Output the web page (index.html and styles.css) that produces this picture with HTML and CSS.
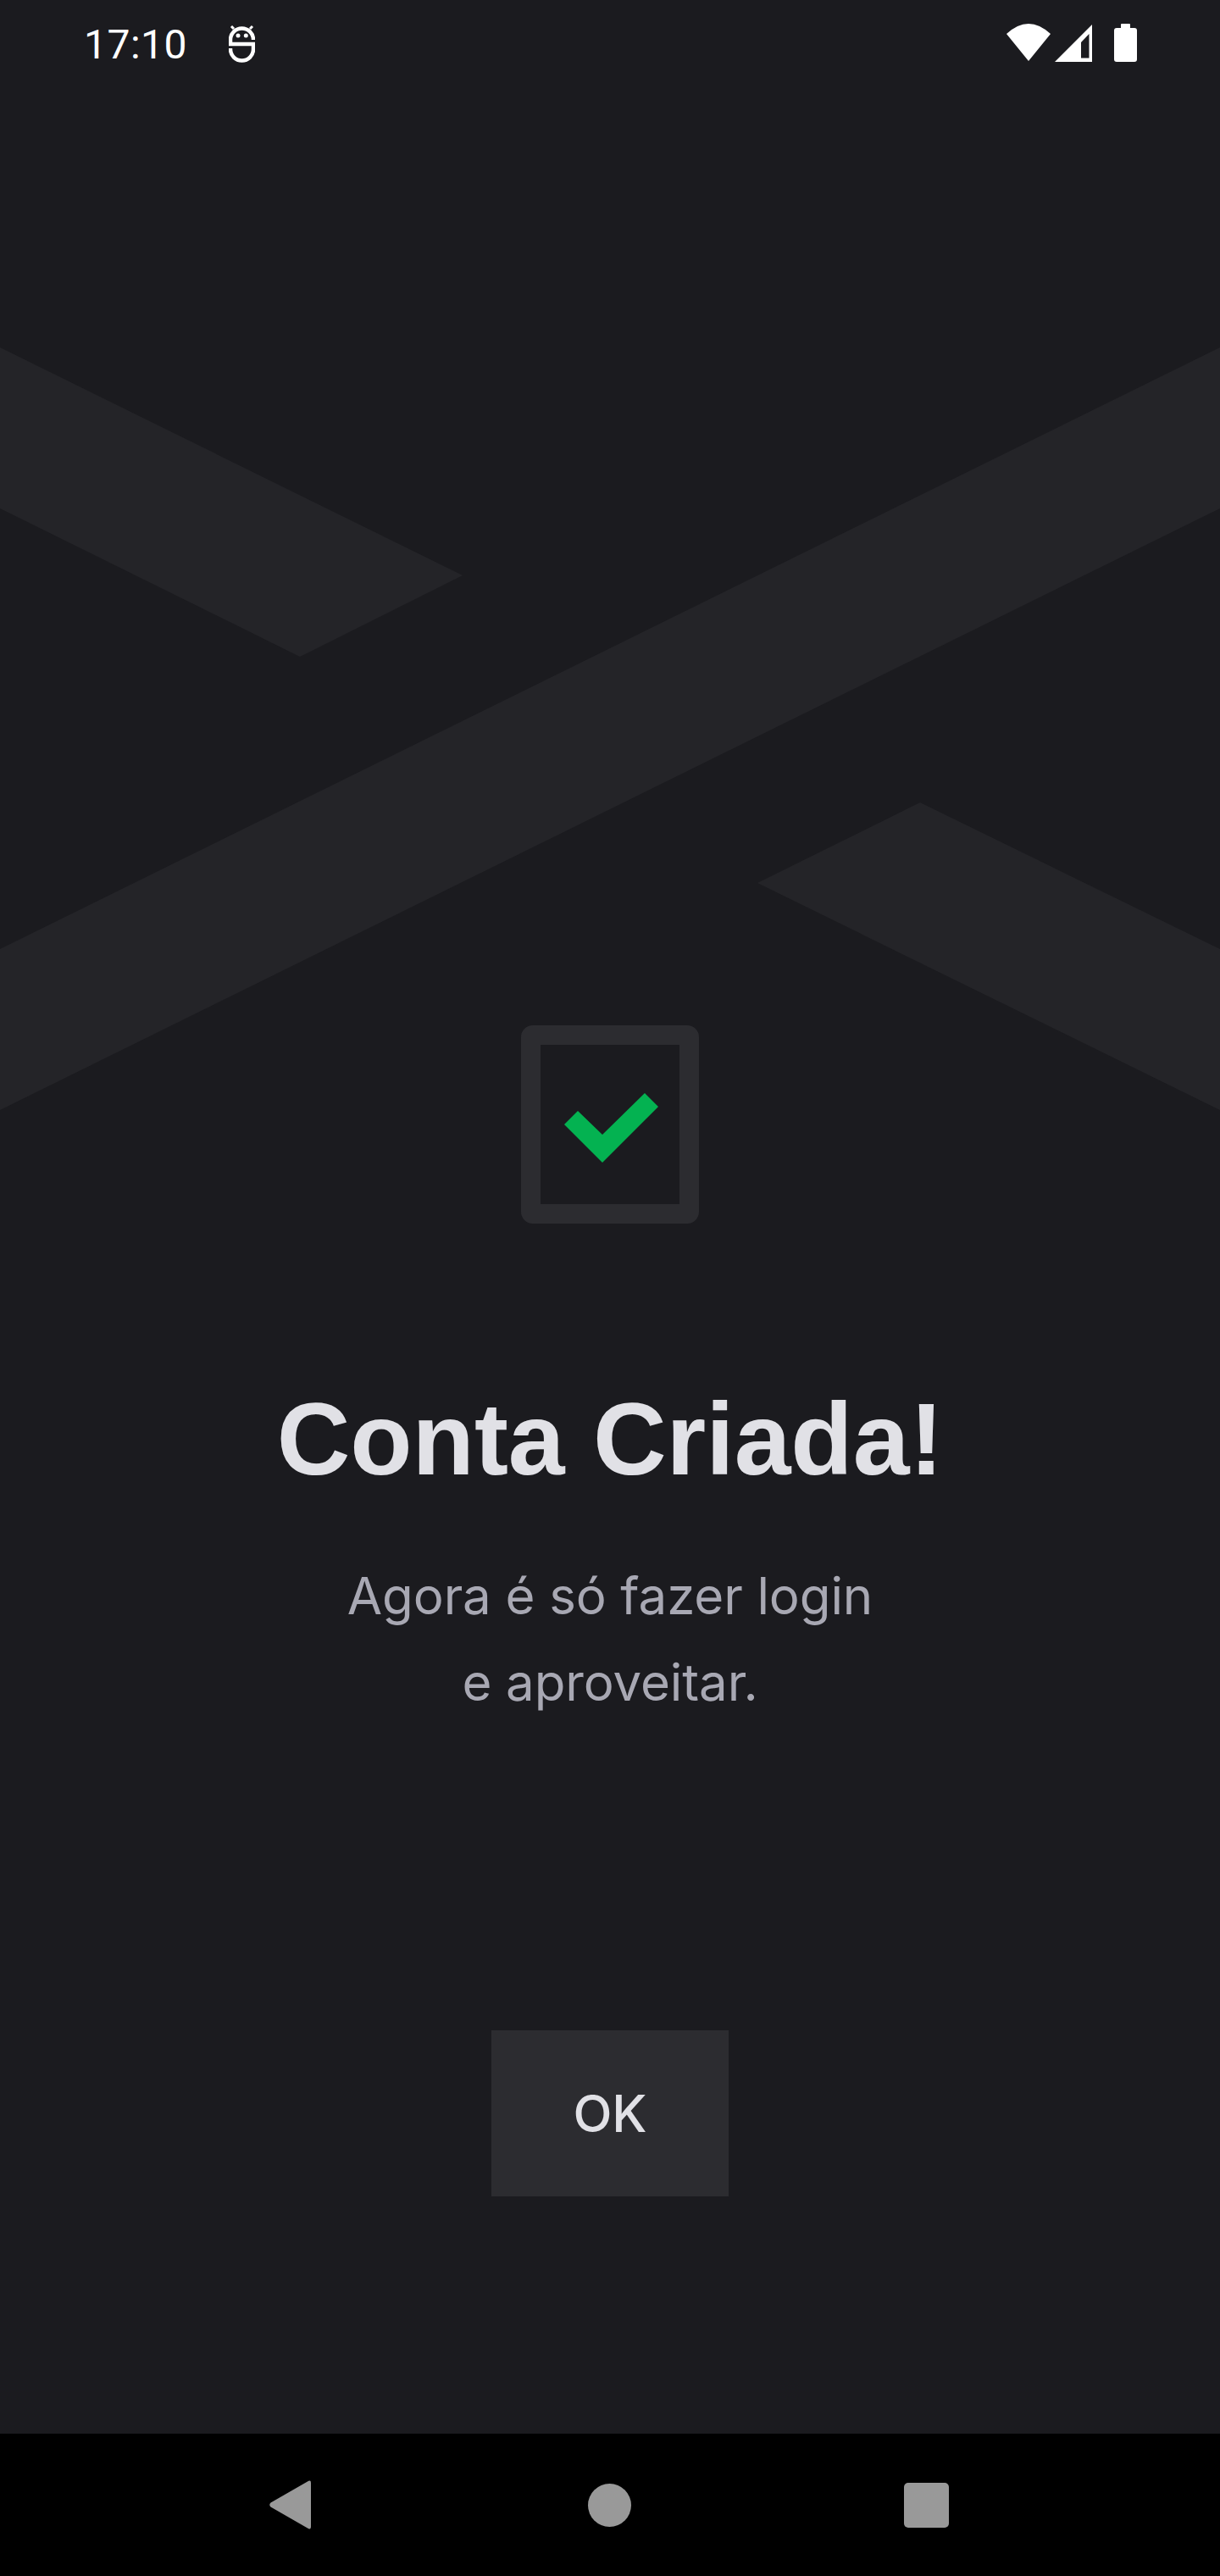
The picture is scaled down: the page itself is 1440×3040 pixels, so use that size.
FILE: index.html
```html
<!DOCTYPE html>
<html>
<head>
    <title>Conta Criada</title>
    <link rel="stylesheet" href="styles.css">
</head>
<body>
    <div class="screen">
        <svg class="bg-shapes" width="1440" height="2872" viewBox="0 0 1440 2872">
            <polygon points="0,410 546,679 354,775 0,600"/>
            <polygon points="0,1120 1440,410 1440,600 0,1310"/>
            <polygon points="894,1042 1086,947 1440,1120 1440,1310"/>
        </svg>

        <div class="status-bar">
            <span class="time">17:10</span>
            <svg class="bot-icon" width="31" height="46" viewBox="0 0 31 46">
                <path class="line" d="M29 16 V19 A13.5 13.5 0 0 0 2 19 V24 H29 V30 A13.5 13.5 0 0 1 2 30 V29"/>
                <path class="antenna" d="M3 3 L6 6 M28 3 L25 6"/>
                <circle cx="11" cy="14" r="2.5"/>
                <circle cx="20.3" cy="14" r="2.5"/>
            </svg>
            <div class="status-right">
                <svg width="54" height="46" viewBox="0 0 54 46">
                    <path d="M27 45 L1 13 Q27 -11 53 13 Z"/>
                </svg>
                <svg width="44" height="44" viewBox="0 0 44 44">
                    <path fill-rule="evenodd" d="M0 44 L44 0 V44 Z M31 21 V39.5 H40.5 V11 Z"/>
                </svg>
                <div class="battery">
                    <div class="battery-cap"></div>
                    <div class="battery-body"></div>
                </div>
            </div>
        </div>

        <div class="content">
            <div class="check-box">
                <svg width="112" height="83" viewBox="0 0 112 83">
                    <polygon points="0,37 16,21 45,49 95,0 111,16 45,82" />
                </svg>
            </div>
            <h1 class="title">Conta Criada!</h1>
            <p class="subtitle">Agora é só fazer login<br>e aproveitar.</p>
            <button class="ok-btn">OK</button>
        </div>

        <div class="nav-bar">
            <svg class="nav-back" width="50" height="58" viewBox="0 0 50 58">
                <path d="M1.5 26.5 L45 1.5 Q49 -1 49 3 V55 Q49 59 45 56.5 L1.5 31.5 Q-1 29 1.5 26.5 Z"/>
            </svg>
            <div class="nav-home"></div>
            <div class="nav-recent"></div>
        </div>
    </div>
</body>
</html>
```

FILE: styles.css
```css
* {
    box-sizing: border-box;
}

body {
    margin: 0;
    background-color: #1b1b1f;
}

.screen {
    position: relative;
    width: 1440px;
    height: 3040px;
    display: flex;
    flex-direction: column;
    background-color: #1b1b1f;
    overflow: hidden;
}

.bg-shapes {
    position: absolute;
    top: 0;
    left: 0;
}

.bg-shapes polygon {
    fill: #242428;
}

.status-bar {
    position: relative;
    height: 106px;
    display: flex;
    align-items: center;
    padding: 0 98px 0 99px;
    color: white;
}

.status-bar svg {
    fill: white;
    display: block;
}

.time {
    font-family: Roboto, sans-serif;
    font-size: 48px;
    line-height: 56px;
    letter-spacing: 0.5px;
}

.bot-icon {
    margin-left: 49px;
    margin-bottom: 4px;
}

.bot-icon .line {
    fill: none;
    stroke: white;
    stroke-width: 4.5;
}

.bot-icon .antenna {
    fill: none;
    stroke: white;
    stroke-width: 3;
}

.status-right {
    margin-left: auto;
    margin-bottom: 6px;
    display: flex;
    align-items: flex-end;
    gap: 4px;
}

.battery {
    margin-left: 22px;
    display: flex;
    flex-direction: column;
    align-items: center;
}

.battery-cap {
    width: 11px;
    height: 5px;
    background-color: white;
    border-radius: 1px 1px 0 0;
}

.battery-body {
    width: 27px;
    height: 40px;
    background-color: white;
    border-radius: 3px;
}

.content {
    position: relative;
    flex: 1;
    display: flex;
    flex-direction: column;
    align-items: center;
    padding-top: 1104px;
}

.check-box {
    width: 210px;
    height: 234px;
    padding: 9px 0 0 4px;
    border: 23px solid #2c2c30;
    border-radius: 14px;
    display: flex;
    justify-content: center;
    align-items: center;
}

.check-box svg {
    fill: #04b251;
    display: block;
    flex-shrink: 0;
}

.title {
    margin: 194px 0 0;
    font-family: "Liberation Sans", Arial, sans-serif;
    font-size: 120px;
    line-height: 120px;
    font-weight: 700;
    color: #e1e1e6;
}

.subtitle {
    margin: 74px 0 0;
    font-family: Inter, sans-serif;
    font-size: 60px;
    line-height: 102px;
    font-weight: 400;
    letter-spacing: -0.1px;
    color: #a8a8b3;
    text-align: center;
}

.ok-btn {
    margin-top: 360px;
    width: 280px;
    height: 196px;
    border: none;
    background-color: #2c2c30;
    color: #e1e1e6;
    font-family: Inter, sans-serif;
    font-size: 60px;
    font-weight: 500;
}

.nav-bar {
    position: relative;
    height: 168px;
    background-color: black;
    display: flex;
    align-items: center;
    padding: 0 0 0 318px;
}

.nav-home {
    margin-left: 326px;
    width: 51px;
    height: 51px;
    border-radius: 50%;
    background-color: #999;
}

.nav-recent {
    margin-left: 322px;
    width: 53px;
    height: 53px;
    border-radius: 5px;
    background-color: #999;
}

.nav-back {
    fill: #999;
    display: block;
}
```
